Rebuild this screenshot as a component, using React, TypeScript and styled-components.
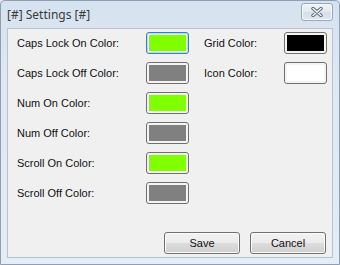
import React from "react";
import styled, { createGlobalStyle } from "styled-components";

const Global = createGlobalStyle`
  html, body { margin: 0; padding: 0; background: #dbe6f2; }
  body { width: 340px; height: 265px; overflow: hidden; }
`;

const Window = styled.div`
  box-sizing: border-box;
  width: 340px;
  height: 265px;
  display: flex;
  flex-direction: column;
  border: 1px solid #8f9fb1;
  border-radius: 5px 5px 0 0;
  background: linear-gradient(to bottom, #d6e2ef 0%, #dfe8f3 30%, #e4ecf5 100%);
`;

const TitleBar = styled.div`
  height: 27px;
  display: flex;
  align-items: center;
  justify-content: space-between;
  padding: 0 6px 0 6px;
`;

const Title = styled.span`
  font-family: "Noto Sans", "Open Sans", sans-serif;
  font-size: 12px;
  color: #3a3a3a;
  margin-top: -1px;
`;

const CloseButton = styled.div`
  box-sizing: border-box;
  align-self: flex-start;
  width: 32px;
  height: 18px;
  margin-top: 2px;
  border: 1px solid #9aa7b6;
  border-radius: 3px;
  background: linear-gradient(to bottom, #eef3f8 0%, #e2e9f1 50%, #d6dfe9 51%, #dfe6ef 100%);
  box-shadow: inset 0 0 0 1px #f6f9fc;
  display: flex;
  align-items: center;
  justify-content: center;
`;

const Client = styled.div`
  flex: 1;
  margin: 0 6px 6px 6px;
  background: #f0f0f0;
  border: 1px solid #b5c3d2;
  display: flex;
  flex-direction: column;
  padding: 3px 6px 3px 9px;
`;

const Columns = styled.div`
  display: flex;
  gap: 15px;
`;

const Column = styled.div`
  display: flex;
  flex-direction: column;
  gap: 8px;
`;

const Row = styled.div`
  display: flex;
  align-items: center;
  height: 22px;
`;

const Label = styled.span<{ $w: number }>`
  width: ${(p) => p.$w}px;
  font-family: "Liberation Sans", Arial, sans-serif;
  font-size: 11px;
  color: #111;
`;

const Swatch = styled.div<{ $color: string; $focused?: boolean }>`
  box-sizing: border-box;
  width: 43px;
  height: 22px;
  border-radius: 3px;
  border: 1px solid ${(p) => (p.$focused ? "#3c7fb1" : "#707070")};
  box-shadow: inset 0 0 0 1px ${(p) => (p.$focused ? "#a9e3f8" : "#f4f4f4")};
  padding: 2px;
  background: #f4f4f4;
  &::after {
    content: "";
    display: block;
    width: 100%;
    height: 100%;
    background: ${(p) => p.$color};
  }
`;

const Footer = styled.div`
  margin-top: auto;
  display: flex;
  justify-content: flex-end;
  gap: 10px;
`;

const Button = styled.div`
  box-sizing: border-box;
  width: 76px;
  height: 22px;
  border: 1px solid #707070;
  border-radius: 3px;
  background: linear-gradient(to bottom, #f2f2f2 0%, #ebebeb 50%, #dddddd 51%, #cfcfcf 100%);
  box-shadow: inset 0 0 0 1px #fbfbfb;
  display: flex;
  align-items: center;
  justify-content: center;
  font-family: "Liberation Sans", Arial, sans-serif;
  font-size: 11px;
  color: #111;
`;

const GREEN = "#80ff00";
const GREY = "#808080";

const leftRows = [
  { label: "Caps Lock On Color:", color: GREEN, focused: true },
  { label: "Caps Lock Off Color:", color: GREY },
  { label: "Num On Color:", color: GREEN },
  { label: "Num Off Color:", color: GREY },
  { label: "Scroll On Color:", color: GREEN },
  { label: "Scroll Off Color:", color: GREY },
];

const rightRows = [
  { label: "Grid Color:", color: "#000000" },
  { label: "Icon Color:", color: "#ffffff" },
];

export default function App() {
  return (
    <>
      <Global />
      <Window>
        <TitleBar>
          <Title>[#] Settings [#]</Title>
          <CloseButton>
            <svg width="12" height="10" viewBox="0 0 12 10">
              <path d="M2 1.5 L10 8.5 M10 1.5 L2 8.5" stroke="#5b6673" strokeWidth="3.4" strokeLinecap="round" />
              <path d="M2 1.5 L10 8.5 M10 1.5 L2 8.5" stroke="#f4f6f9" strokeWidth="1.6" strokeLinecap="round" />
            </svg>
          </CloseButton>
        </TitleBar>
        <Client>
          <Columns>
            <Column>
              {leftRows.map((r) => (
                <Row key={r.label}>
                  <Label $w={129}>{r.label}</Label>
                  <Swatch $color={r.color} $focused={r.focused} />
                </Row>
              ))}
            </Column>
            <Column>
              {rightRows.map((r) => (
                <Row key={r.label}>
                  <Label $w={80}>{r.label}</Label>
                  <Swatch $color={r.color} />
                </Row>
              ))}
            </Column>
          </Columns>
          <Footer>
            <Button>Save</Button>
            <Button>Cancel</Button>
          </Footer>
        </Client>
      </Window>
    </>
  );
}
